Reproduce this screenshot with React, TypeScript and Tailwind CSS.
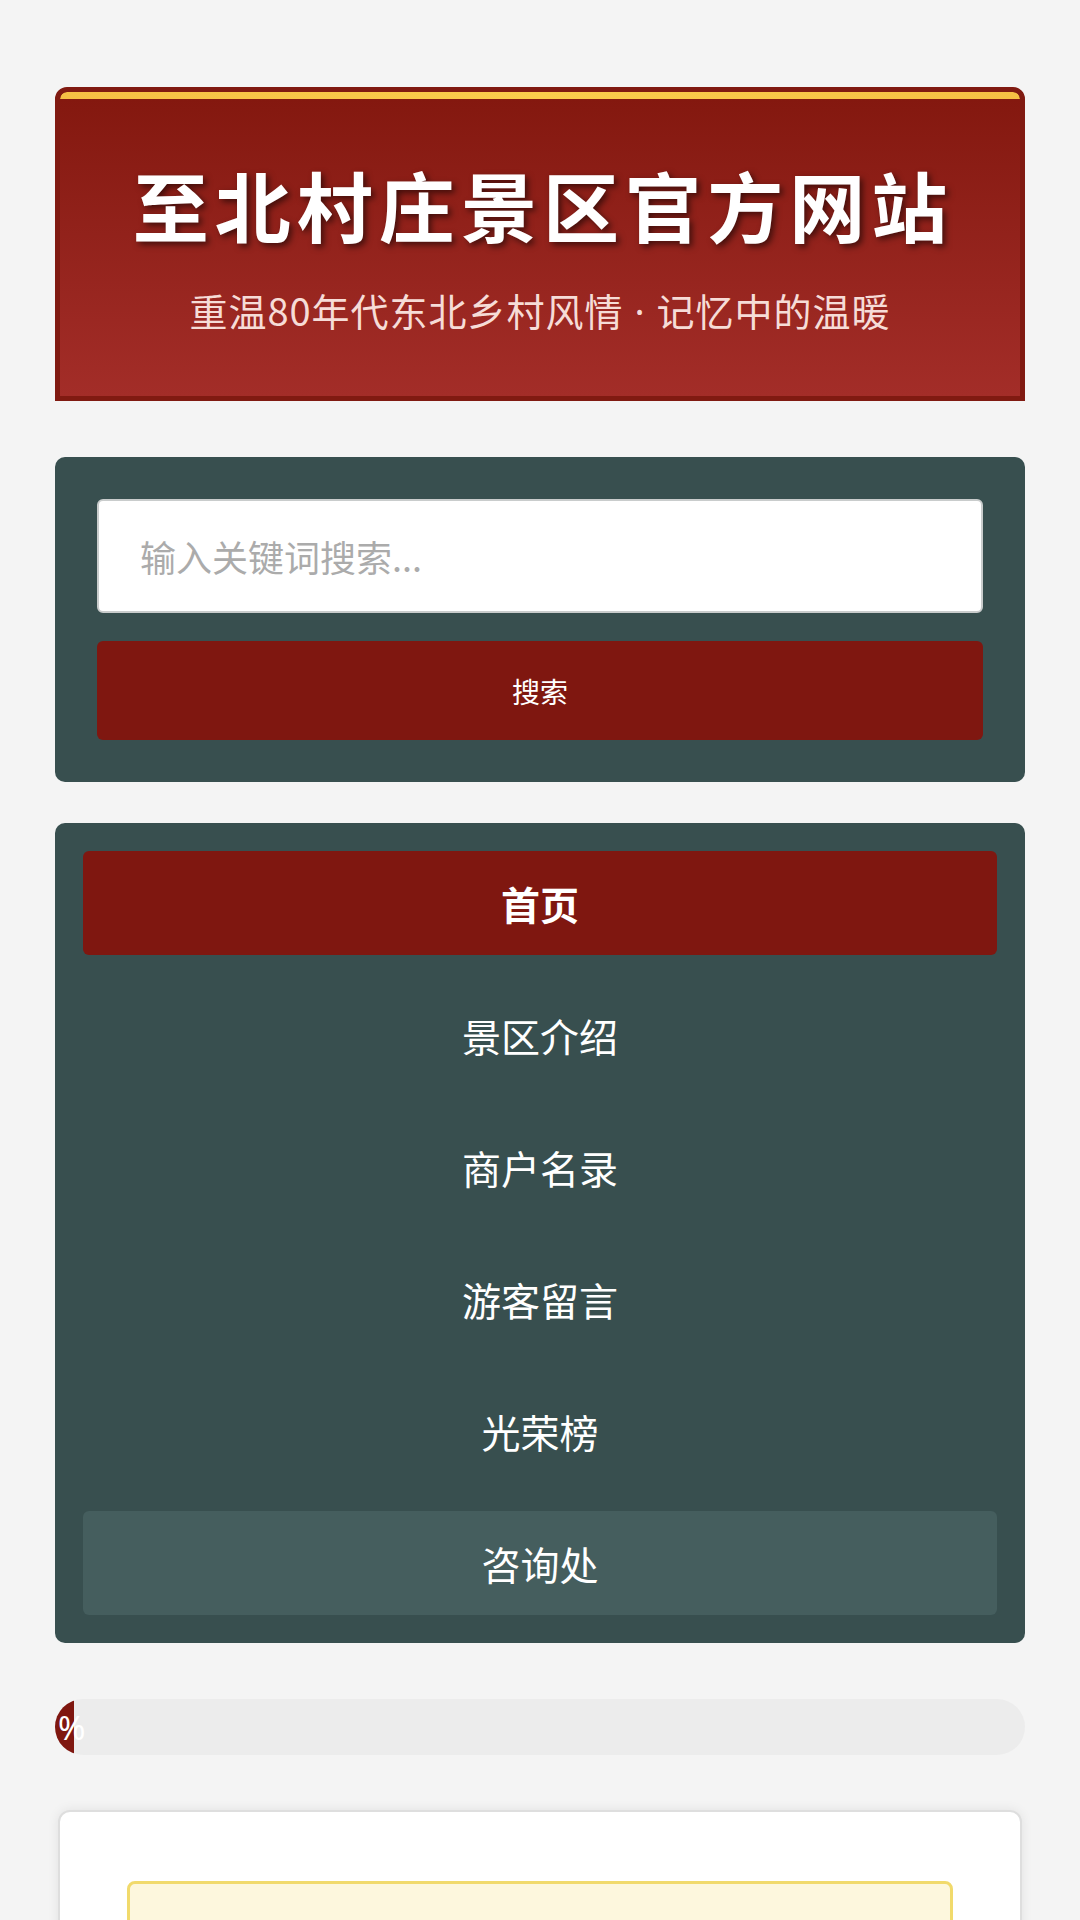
import React from 'react';

const navItems = [
    { label: '首页', active: true },
    { label: '景区介绍' },
    { label: '商户名录' },
    { label: '游客留言' },
    { label: '光荣榜' },
    { label: '咨询处', hover: true },
];

export default function App() {
    return (
        <div
            className="min-h-screen bg-[#f4f4f4] px-[55px] pt-[87px] pb-10"
            style={{ fontFamily: '"Noto Sans CJK SC", "Noto Sans", sans-serif' }}
        >
            {/* Header */}
            <header className="rounded-t-[12px] border-[5px] border-[#801a11] overflow-hidden bg-[#801a11]">
                <div className="h-[7px] rounded-t-[8px] bg-gradient-to-r from-[#f6c044] via-[#fbcd4c] to-[#f6c044]"></div>
                <div className="flex flex-col items-center bg-gradient-to-b from-[#84180f] to-[#a32d28] pt-[60px] pb-[56px]">
                    <h1 className="text-white font-bold text-[76px] leading-[1.2] tracking-[0.08em] pl-[0.08em] [text-shadow:3px_3px_6px_rgba(0,0,0,0.55)]">
                        至北村庄景区官方网站
                    </h1>
                    <p className="mt-[31px] text-[38px] leading-[1.5] text-[#f6dcd7] tracking-[1px]">
                        重温80年代东北乡村风情
                        <span style={{ fontFamily: '"Noto Sans", sans-serif' }}> · </span>
                        记忆中的温暖
                    </p>
                </div>
            </header>

            {/* Search */}
            <div className="mt-[56px] rounded-[10px] bg-[#384f4f] p-[42px]">
                <input
                    type="text"
                    placeholder="输入关键词搜索..."
                    className="block w-full h-[114px] rounded-[6px] border-2 border-[#c9cccc] bg-white px-[41px] text-[36px] text-[#333] placeholder:text-[#ababab] outline-none"
                />
                <button className="mt-[28px] block w-full h-[99px] rounded-[6px] bg-[#7f1710] text-white text-[28px]">
                    搜索
                </button>
            </div>

            {/* Navigation */}
            <nav className="mt-[41px] rounded-[10px] bg-[#384f4f] p-[28px] flex flex-col gap-[28px]">
                {navItems.map((item) => (
                    <a
                        key={item.label}
                        className={`flex items-center justify-center h-[104px] rounded-[6px] text-white text-[39px] ${
                            item.active ? 'bg-[#7f1710] font-bold' : item.hover ? 'bg-[#455e5e]' : ''
                        }`}
                    >
                        {item.label}
                    </a>
                ))}
            </nav>

            {/* Progress */}
            <div className="mt-[56px] h-[56px] rounded-full bg-[#ececec] overflow-hidden">
                <div className="relative h-full w-[19px] bg-[#7f1710]">
                    <span
                        className="absolute left-[3px] top-1/2 -translate-y-1/2 text-white text-[33px] leading-none whitespace-nowrap"
                        style={{ fontFamily: '"Noto Sans", sans-serif' }}
                    >
                        %
                    </span>
                </div>
            </div>

            {/* Content card */}
            <div className="mt-[55px] mx-[3px] rounded-[12px] border-2 border-[#dedede] bg-white shadow-[0_0_12px_rgba(0,0,0,0.08)] px-[67px] pt-[69px] pb-10">
                <div className="h-[220px] rounded-[8px] border-[3px] border-[#f1da6c] bg-[#fdf7dd]"></div>
            </div>
        </div>
    );
}
